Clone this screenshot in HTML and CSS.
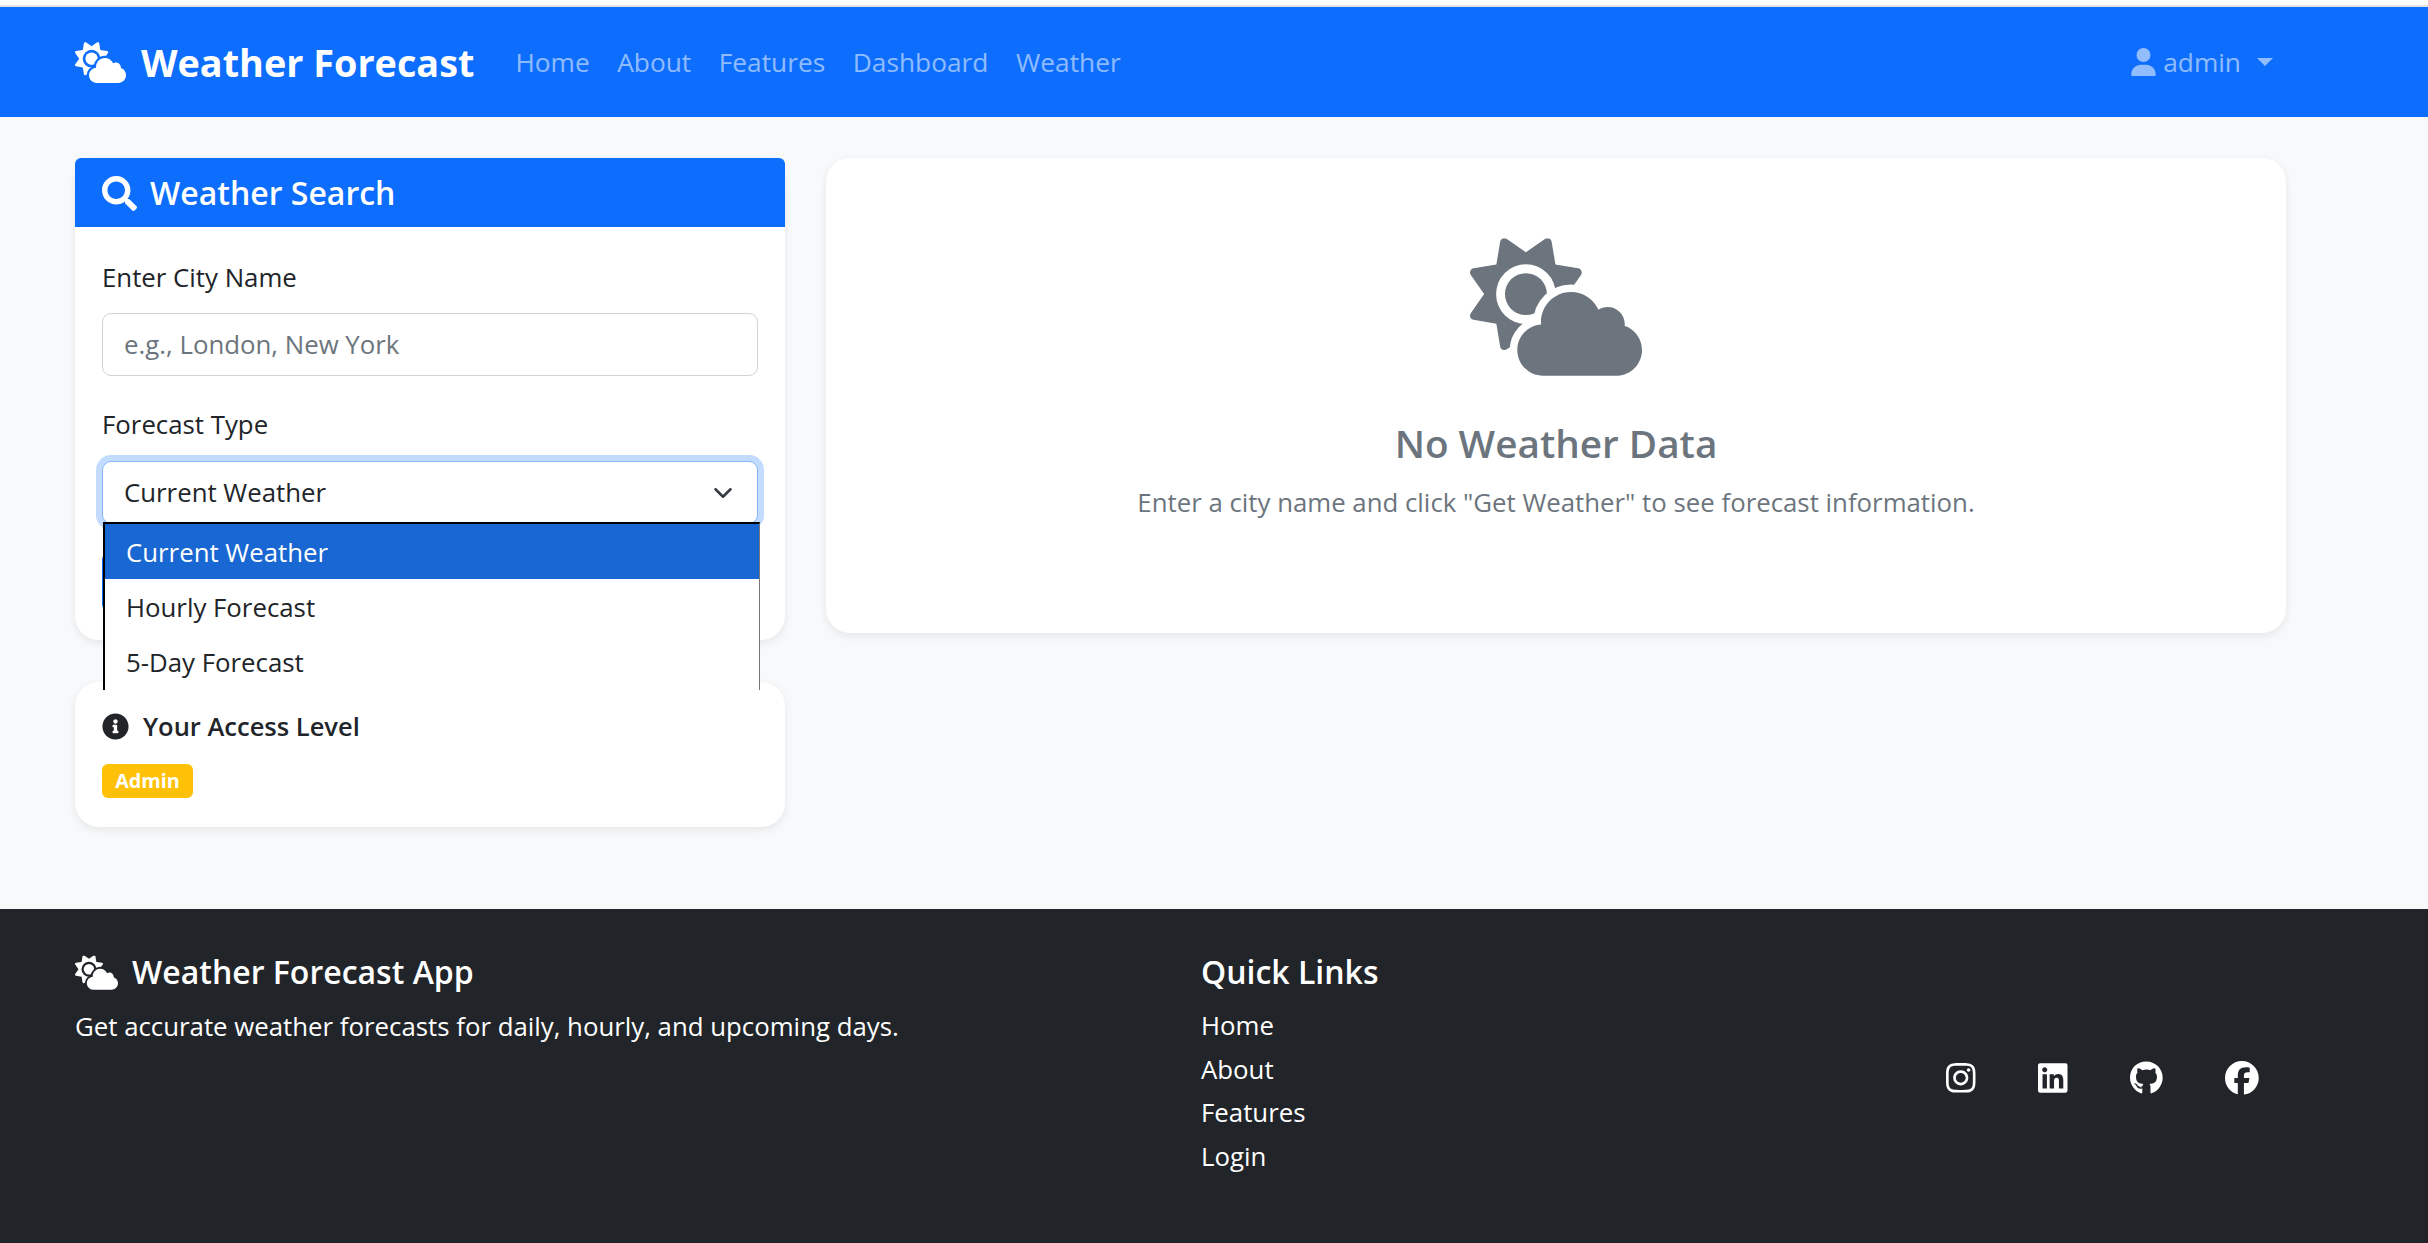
FILE: index.html
```html
<!DOCTYPE html>
<html lang="en">
<head>
<meta charset="UTF-8">
<meta name="viewport" content="width=device-width, initial-scale=1.0">
<title>Weather Forecast</title>
<link rel="stylesheet" href="styles.css">
</head>
<body>

<svg class="icon-defs" width="0" height="0">
  <mask id="sun-cut" maskUnits="userSpaceOnUse" x="0" y="0" width="640" height="512">
    <rect width="640" height="512" fill="#fff"/>
    <circle cx="208" cy="208" r="111" fill="#000"/>
    <circle cx="208" cy="208" r="78" fill="#fff"/>
    <path d="M575.2 325.7c.2-1.9.8-3.7.8-5.7 0-35.3-28.7-64-64-64-12.6 0-24.2 3.8-34.1 10-17.6-38.8-56.5-66-101.9-66-61.8 0-112 50.1-112 112 0 3 .7 5.8.9 8.7-49.6 3.7-88.9 44.7-88.9 95.3 0 53 43 96 96 96h272c53 0 96-43 96-96 0-42.1-27.2-77.4-64.8-90.3z" fill="#000" stroke="#000" stroke-width="56"/>
  </mask>
  <symbol id="i-cloud-sun" viewBox="0 0 640 512">
    <path mask="url(#sun-cut)" d="M294.2 1.2c5.1 2.1 8.7 6.7 9.6 12.1l14.1 84.7 84.7 14.1c5.4 .9 10 4.5 12.1 9.6s1.5 10.9-1.6 15.4L363.5 208l49.6 70.8c3.2 4.5 3.8 10.3 1.6 15.4s-6.7 8.7-12.1 9.6l-84.7 14.1-14.1 84.7c-.9 5.4-4.5 10-9.6 12.1s-10.9 1.5-15.4-1.6L208 363.5l-70.8 49.6c-4.5 3.2-10.3 3.8-15.4 1.6s-8.7-6.7-9.6-12.1L98.1 317.9 13.4 303.8c-5.4-.9-10-4.5-12.1-9.6s-1.5-10.9 1.6-15.4L52.5 208 2.9 137.2c-3.2-4.5-3.8-10.3-1.6-15.4s6.7-8.7 12.1-9.6L98.1 98.1l14.1-84.7c.9-5.4 4.5-10 9.6-12.1s10.9-1.5 15.4 1.6L208 52.5 278.8 2.9c4.5-3.2 10.3-3.8 15.4-1.6z"/>
    <path d="M575.2 325.7c.2-1.9.8-3.7.8-5.7 0-35.3-28.7-64-64-64-12.6 0-24.2 3.8-34.1 10-17.6-38.8-56.5-66-101.9-66-61.8 0-112 50.1-112 112 0 3 .7 5.8.9 8.7-49.6 3.7-88.9 44.7-88.9 95.3 0 53 43 96 96 96h272c53 0 96-43 96-96 0-42.1-27.2-77.4-64.8-90.3z"/>
  </symbol>
</svg>

<div class="top-strip"></div>

<nav class="navbar">
  <a class="brand" href="#">
    <svg class="brand-icon"><use href="#i-cloud-sun"/></svg>
    <span>Weather Forecast</span>
  </a>
  <div class="nav-links">
    <a href="#">Home</a>
    <a href="#">About</a>
    <a href="#">Features</a>
    <a href="#">Dashboard</a>
    <a href="#">Weather</a>
  </div>
  <a class="nav-user" href="#">
    <svg class="user-icon" viewBox="0 0 448 512"><path d="M224 256A128 128 0 1 0 224 0a128 128 0 1 0 0 256zm-45.7 48C79.8 304 0 383.8 0 482.3C0 498.7 13.3 512 29.7 512H418.3c16.4 0 29.7-13.3 29.7-29.7C448 383.8 368.2 304 269.7 304H178.3z"/></svg>
    <span>admin</span>
    <span class="caret"></span>
  </a>
</nav>

<main class="content">
  <div class="side">
    <section class="card search-card">
      <h4 class="card-header">
        <svg class="search-icon" viewBox="0 0 512 512"><path d="M505 442.7L405.3 343c-4.5-4.5-10.6-7-17-7H372c27.6-35.3 44-79.7 44-128C416 93.1 322.9 0 208 0S0 93.1 0 208s93.1 208 208 208c48.3 0 92.7-16.4 128-44v16.3c0 6.4 2.5 12.5 7 17l99.7 99.7c9.4 9.4 24.6 9.4 33.9 0l28.3-28.3c9.4-9.4 9.4-24.6.1-34zM208 336c-70.7 0-128-57.2-128-128 0-70.7 57.2-128 128-128 70.7 0 128 57.2 128 128 0 70.7-57.2 128-128 128z"/></svg>
        <span>Weather Search</span>
      </h4>
      <form class="card-body" onsubmit="return false;">
        <label class="form-label" for="city">Enter City Name</label>
        <input class="form-input" type="text" id="city" placeholder="e.g., London, New York">
        <label class="form-label" for="type">Forecast Type</label>
        <div class="select-wrap">
          <div class="form-select" id="type">
            <span>Current Weather</span>
            <svg class="chevron" viewBox="0 0 16 16"><path d="M2 5l6 6 6-6" fill="none" stroke="#343a40" stroke-width="2" stroke-linecap="round" stroke-linejoin="round"/></svg>
          </div>
          <ul class="select-menu">
            <li class="selected">Current Weather</li>
            <li>Hourly Forecast</li>
            <li>5-Day Forecast</li>
          </ul>
        </div>
        <button class="btn-primary">Get Weather</button>
      </form>
    </section>

    <section class="card access-card">
      <h6 class="access-title">
        <svg class="info-icon" viewBox="0 0 512 512"><path d="M256 8C119.043 8 8 119.083 8 256c0 136.997 111.043 248 248 248s248-111.003 248-248C504 119.083 392.957 8 256 8zm0 110c23.196 0 42 18.804 42 42s-18.804 42-42 42-42-18.804-42-42 18.804-42 42-42zm56 254c0 6.627-5.373 12-12 12h-88c-6.627 0-12-5.373-12-12v-24c0-6.627 5.373-12 12-12h12v-64h-12c-6.627 0-12-5.373-12-12v-24c0-6.627 5.373-12 12-12h64c6.627 0 12 5.373 12 12v100h12c6.627 0 12 5.373 12 12v24z"/></svg>
        <span>Your Access Level</span>
      </h6>
      <span class="badge">Admin</span>
    </section>
  </div>

  <section class="card empty-card">
    <svg class="empty-icon"><use href="#i-cloud-sun"/></svg>
    <h3 class="empty-title">No Weather Data</h3>
    <p class="empty-text">Enter a city name and click "Get Weather" to see forecast information.</p>
  </section>
</main>

<footer class="footer">
  <div class="footer-about">
    <h5 class="footer-title">
      <svg class="footer-icon"><use href="#i-cloud-sun"/></svg>
      <span>Weather Forecast App</span>
    </h5>
    <p class="footer-text">Get accurate weather forecasts for daily, hourly, and upcoming days.</p>
  </div>
  <div class="footer-links">
    <h5 class="footer-title">Quick Links</h5>
    <a href="#">Home</a>
    <a href="#">About</a>
    <a href="#">Features</a>
    <a href="#">Login</a>
  </div>
  <div class="footer-social">
    <a href="#" aria-label="Instagram"><svg class="social-icon ig" viewBox="0 0 448 512"><path d="M224.1 141c-63.6 0-114.9 51.3-114.9 114.9s51.3 114.9 114.9 114.9S339 319.5 339 255.9 287.7 141 224.1 141zm0 189.6c-41.1 0-74.7-33.5-74.7-74.7s33.5-74.7 74.7-74.7 74.7 33.5 74.7 74.7-33.6 74.7-74.7 74.7zm146.4-194.3c0 14.9-12 26.8-26.8 26.8-14.9 0-26.8-12-26.8-26.8s12-26.8 26.8-26.8 26.8 12 26.8 26.8zm76.1 27.2c-1.7-35.9-9.9-67.7-36.2-93.9-26.2-26.2-58-34.4-93.9-36.2-37-2.1-147.9-2.1-184.9 0-35.8 1.7-67.6 9.9-93.9 36.1s-34.4 58-36.2 93.9c-2.1 37-2.1 147.9 0 184.9 1.7 35.9 9.9 67.7 36.2 93.9s58 34.4 93.9 36.2c37 2.1 147.9 2.1 184.9 0 35.9-1.7 67.7-9.9 93.9-36.2 26.2-26.2 34.4-58 36.2-93.9 2.1-37 2.1-147.8 0-184.8zM398.8 388c-7.8 19.6-22.9 34.7-42.6 42.6-29.5 11.7-99.5 9-132.1 9s-102.7 2.6-132.1-9c-19.6-7.8-34.7-22.9-42.6-42.6-11.7-29.5-9-99.5-9-132.1s-2.6-102.7 9-132.1c7.8-19.6 22.9-34.7 42.6-42.6 29.5-11.7 99.5-9 132.1-9s102.7-2.6 132.1 9c19.6 7.8 34.7 22.9 42.6 42.6 11.7 29.5 9 99.5 9 132.1s2.7 102.7-9 132.1z"/></svg></a>
    <a href="#" aria-label="LinkedIn"><svg class="social-icon li" viewBox="0 0 448 512"><path d="M416 32H31.9C14.3 32 0 46.5 0 64.3v383.4C0 465.5 14.3 480 31.9 480H416c17.6 0 32-14.5 32-32.3V64.3c0-17.8-14.4-32.3-32-32.3zM135.4 416H69V202.2h66.5V416zm-33.2-243c-21.3 0-38.5-17.3-38.5-38.5S80.9 96 102.2 96c21.2 0 38.5 17.3 38.5 38.5 0 21.3-17.2 38.5-38.5 38.5zm282.1 243h-66.4V312c0-24.8-.5-56.7-34.5-56.7-34.6 0-39.9 27-39.9 54.9V416h-66.4V202.2h63.7v29.2h.9c8.9-16.8 30.6-34.5 62.9-34.5 67.2 0 79.7 44.3 79.7 101.9V416z"/></svg></a>
    <a href="#" aria-label="GitHub"><svg class="social-icon gh" viewBox="0 0 496 512"><path d="M165.9 397.4c0 2-2.3 3.6-5.2 3.6-3.3.3-5.6-1.3-5.6-3.6 0-2 2.3-3.6 5.2-3.6 3-.3 5.6 1.3 5.6 3.6zm-31.1-4.5c-.7 2 1.3 4.3 4.3 4.9 2.6 1 5.6 0 6.2-2s-1.3-4.3-4.3-5.2c-2.6-.7-5.5.3-6.2 2.3zm44.2-1.7c-2.9.7-4.9 2.6-4.6 4.9.3 2 2.9 3.3 5.9 2.6 2.9-.7 4.9-2.6 4.6-4.6-.3-1.9-3-3.2-5.9-2.9zM244.8 8C106.1 8 0 113.3 0 252c0 110.9 69.8 205.8 169.5 239.2 12.8 2.3 17.3-5.6 17.3-12.1 0-6.2-.3-40.4-.3-61.4 0 0-70 15-84.7-29.8 0 0-11.4-29.1-27.8-36.6 0 0-22.9-15.7 1.6-15.4 0 0 24.9 2 38.6 25.8 21.9 38.6 58.6 27.5 72.9 20.9 2.3-16 8.8-27.1 16-33.7-55.9-6.2-112.3-14.3-112.3-110.5 0-27.5 7.6-41.3 23.6-58.9-2.6-6.5-11.1-33.3 2.6-67.9 20.9-6.5 69 27 69 27 20-5.6 41.5-8.5 62.8-8.5s42.8 2.9 62.8 8.5c0 0 48.1-33.6 69-27 13.7 34.7 5.2 61.4 2.6 67.9 16 17.7 25.8 31.5 25.8 58.9 0 96.5-58.9 104.2-114.8 110.5 9.2 7.9 17 22.9 17 46.4 0 33.7-.3 75.4-.3 83.6 0 6.5 4.6 14.4 17.3 12.1C428.2 457.8 496 362.9 496 252 496 113.3 383.5 8 244.8 8zM97.2 352.9c-1.3 1-1 3.3.7 5.2 1.6 1.6 3.9 2.3 5.2 1 1.3-1 1-3.3-.7-5.2-1.6-1.6-3.9-2.3-5.2-1zm-10.8-8.1c-.7 1.3.3 2.9 2.3 3.9 1.6 1 3.6.7 4.3-.7.7-1.3-.3-2.9-2.3-3.9-2-.6-3.6-.3-4.3.7zm32.4 35.6c-1.6 1.3-1 4.3 1.3 6.2 2.3 2.3 5.2 2.6 6.5 1 1.3-1.3.7-4.3-1.3-6.2-2.2-2.3-5.2-2.6-6.5-1zm-11.4-14.7c-1.6 1-1.6 3.6 0 5.9 1.6 2.3 4.3 3.3 5.6 2.3 1.6-1.3 1.6-3.9 0-6.2-1.4-2.3-4-3.3-5.6-2z"/></svg></a>
    <a href="#" aria-label="Facebook"><svg class="social-icon fb" viewBox="0 0 512 512"><path d="M512 256C512 114.6 397.4 0 256 0S0 114.6 0 256C0 376 82.7 476.8 194.2 504.5V334.2H141.4V256h52.8V222.3c0-87.1 39.4-127.5 125-127.5c16.2 0 44.2 3.2 55.7 6.4V172c-6-.6-16.5-1-29.6-1c-42 0-58.2 15.9-58.2 57.2V256h83.6l-14.4 78.2H287V510.1C413.8 494.8 512 386.9 512 256h0z"/></svg></a>
  </div>
</footer>

</body>
</html>
```

FILE: styles.css
```css
* {
  box-sizing: border-box;
}
body {
  margin: 0;
  height: 1243px;
  overflow: hidden;
  display: flex;
  flex-direction: column;
  font-family: "Open Sans", "Noto Sans", sans-serif;
  font-size: 25.8px;
  line-height: 40.5px;
  color: #212529;
  background-color: #f8f9fa;
}
a {
  text-decoration: none;
  color: inherit;
}
svg {
  fill: currentColor;
  flex-shrink: 0;
}
.icon-defs {
  position: absolute;
}
.top-strip {
  height: 7px;
  background-color: #fff;
  border-bottom: 2px solid #e3e3e3;
}

/* navbar */
.navbar {
  height: 110px;
  display: flex;
  align-items: center;
  padding: 0 155px 0 75px;
  background-color: #0d6efd;
}
.brand {
  display: flex;
  align-items: center;
  gap: 15px;
  font-size: 37.8px;
  font-weight: 700;
  color: #fff;
}
.brand span {
  padding-top: 2px;
}
.brand-icon {
  width: 51px;
  height: 41px;
}
.nav-links {
  display: flex;
  gap: 27.5px;
  margin-left: 41px;
  font-size: 26.3px;
  color: rgba(255, 255, 255, 0.55);
}
.nav-user {
  display: flex;
  align-items: center;
  margin-left: auto;
  font-size: 26.3px;
  color: rgba(255, 255, 255, 0.55);
}
.user-icon {
  width: 25px;
  height: 28px;
  margin-right: 7px;
}
.caret {
  margin-left: 16px;
  border-top: 8px solid currentColor;
  border-left: 8px solid transparent;
  border-right: 8px solid transparent;
}

/* main area */
.content {
  flex: 1;
  display: grid;
  grid-template-columns: 710px 1460px;
  column-gap: 41px;
  align-items: start;
  padding: 41px 0 0 75px;
}
.side {
  display: flex;
  flex-direction: column;
  gap: 42px;
}
.card {
  background-color: #fff;
  border-radius: 24px;
  box-shadow: 0 3px 9px rgba(0, 0, 0, 0.08);
}
.card-header {
  margin: 0;
  height: 69px;
  display: flex;
  align-items: center;
  gap: 13px;
  padding: 2px 27px 0;
  font-size: 32px;
  font-weight: 600;
  color: #fff;
  background-color: #0d6efd;
  border-radius: 6px 6px 0 0;
}
.search-icon {
  width: 35px;
  height: 35px;
}
.card-body {
  display: flex;
  flex-direction: column;
  height: 413px;
  padding: 30px 27px 0;
}
.form-label {
  margin-bottom: 15px;
}
.form-input {
  height: 63px;
  margin-bottom: 28px;
  padding: 0 21px;
  font: inherit;
  color: #212529;
  border: 1px solid #ced4da;
  border-radius: 9px;
}
.form-input::placeholder {
  color: #6c757d;
}
.select-wrap {
  position: relative;
  margin-top: 2px;
  margin-bottom: 27px;
}
.form-select {
  height: 63px;
  display: flex;
  align-items: center;
  justify-content: space-between;
  padding: 0 24px 0 21px;
  background-color: #fff;
  border: 1px solid #86b7fe;
  border-radius: 9px;
  box-shadow: 0 0 0 6px rgba(13, 110, 253, 0.25);
}
.chevron {
  width: 20px;
  height: 20px;
}
.select-menu {
  position: absolute;
  z-index: 5;
  top: 61px;
  left: 1px;
  width: 657px;
  height: 168px;
  margin: 0;
  padding: 0;
  list-style: none;
  overflow: hidden;
  background-color: #fff;
  border-top: 2px solid #000;
  border-left: 2px solid #000;
  border-right: 1px solid #767676;
}
.select-menu li {
  height: 55px;
  padding: 2px 0 0 21px;
  line-height: 53px;
}
.select-menu li.selected {
  color: #fff;
  background-color: #1967d2;
}
.btn-primary {
  height: 62px;
  font: inherit;
  color: #fff;
  background-color: #0d6efd;
  border: 0;
  border-radius: 9px;
}
.access-card {
  height: 145px;
  padding: 24px 27px 0;
}
.access-title {
  margin: 0 0 17px;
  display: flex;
  align-items: center;
  gap: 14px;
  font-size: 25.5px;
  font-weight: 600;
}
.info-icon {
  width: 27px;
  height: 27px;
}
.badge {
  display: block;
  width: 91px;
  height: 34px;
  line-height: 34px;
  text-align: center;
  font-size: 19.8px;
  font-weight: 700;
  color: #fff;
  background-color: #ffc107;
  border-radius: 6px;
}
.empty-card {
  height: 475px;
  display: flex;
  flex-direction: column;
  align-items: center;
  padding-top: 80px;
  color: #6c757d;
}
.empty-icon {
  width: 172px;
  height: 138px;
}
.empty-title {
  margin: 43px 0 15px;
  font-size: 38.7px;
  line-height: 48px;
  font-weight: 600;
}
.empty-text {
  margin: 0;
}

/* footer */
.footer {
  height: 334px;
  display: grid;
  grid-template-columns: 1126px 745px 1fr;
  padding: 45px 0 0 75px;
  color: #fff;
  background-color: #212529;
}
.footer-title {
  margin: 0 0 16px;
  display: flex;
  align-items: center;
  gap: 14px;
  font-size: 32px;
  line-height: 36px;
  font-weight: 600;
}
.footer-icon {
  width: 43px;
  height: 35px;
}
.footer-text {
  margin: 0;
}
.footer-links {
  display: flex;
  flex-direction: column;
  gap: 3px;
}
.footer-links .footer-title {
  margin-bottom: 12px;
}
.footer-social {
  display: flex;
  align-items: center;
  gap: 62.5px;
  height: 248px;
}
.social-icon {
  display: block;
  height: 33.75px;
}
.ig, .li {
  width: 29.5px;
}
.gh {
  width: 32.7px;
}
.fb {
  width: 33.75px;
}
```
